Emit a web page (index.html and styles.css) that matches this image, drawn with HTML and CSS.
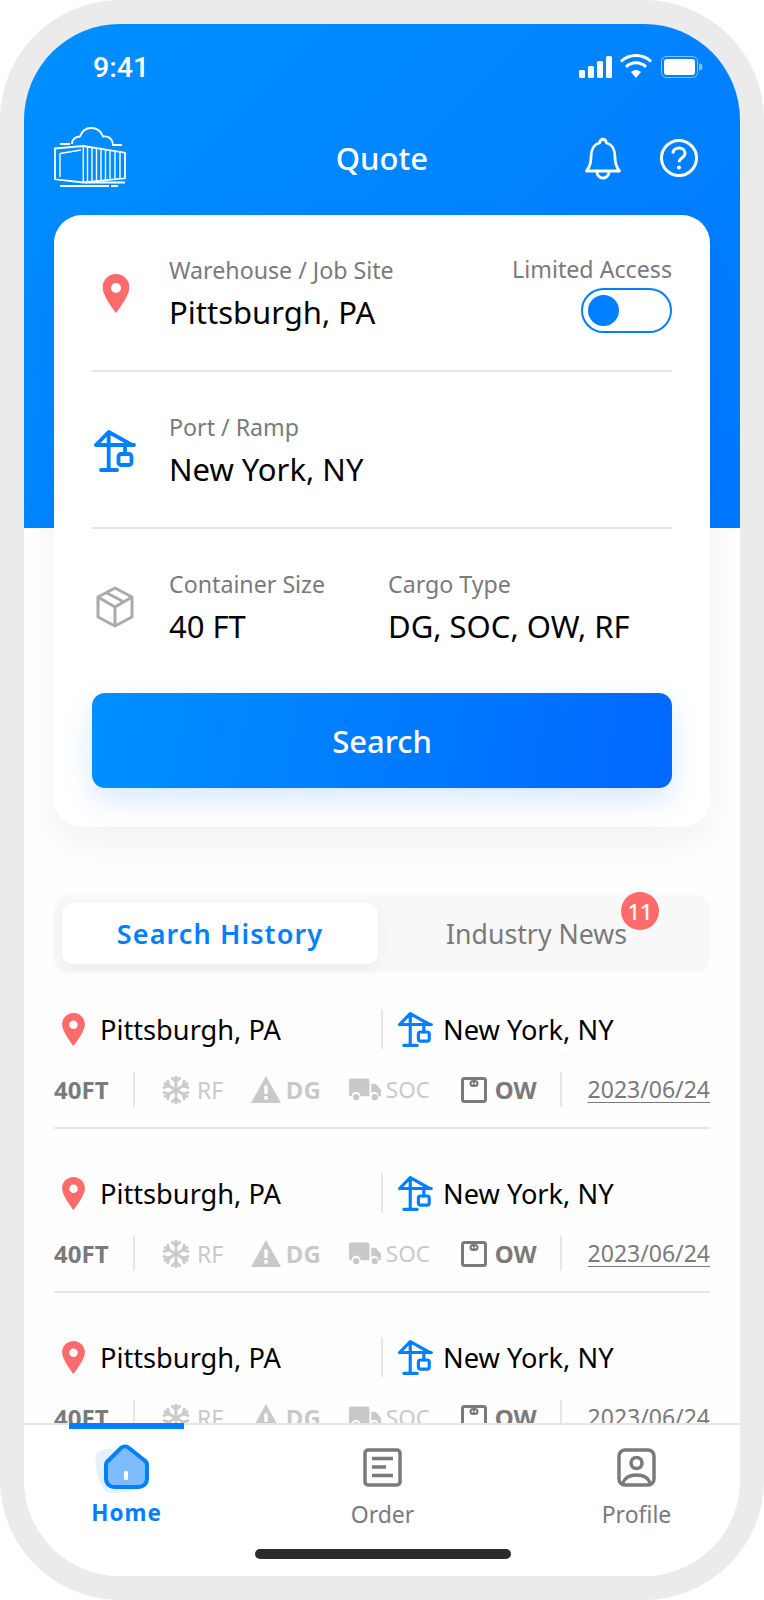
FILE: index.html
```html
<!DOCTYPE html>
<html lang="en">
<head>
<meta charset="utf-8">
<title>Quote</title>
<link rel="stylesheet" href="styles.css">
</head>
<body>
<svg class="defs" width="0" height="0" aria-hidden="true">
  <symbol id="pin" viewBox="0 0 27 39">
    <path fill="#ff6b6b" fill-rule="evenodd" d="M13.5 0C6 0 0 6 0 13.5 0 22 13.5 39 13.5 39S27 22 27 13.5C27 6 21 0 13.5 0zm0 9a5 5 0 1 1 0 10 5 5 0 0 1 0-10z"/>
  </symbol>
  <symbol id="crane" viewBox="0 0 42 42">
    <g fill="none" stroke="#007fff" stroke-width="3.8" stroke-linecap="round" stroke-linejoin="round">
      <path d="M2 15H40M2 15L14.7 2 38 15M14.7 2V40M7 40H23M31 15V24"/>
      <rect x="24.5" y="24" width="13" height="11" rx="2.5"/>
    </g>
  </symbol>
  <symbol id="arm" viewBox="0 0 30 30">
    <path fill="none" stroke="#c9c9c9" stroke-width="2.6" d="M15 15V1M10.500 2.500L15 7l4.500-4.500"/>
  </symbol>
  <symbol id="snow" viewBox="0 0 30 30">
    <use href="#arm" width="30" height="30"/>
    <use href="#arm" width="30" height="30" transform="rotate(60 15 15)"/>
    <use href="#arm" width="30" height="30" transform="rotate(120 15 15)"/>
    <use href="#arm" width="30" height="30" transform="rotate(180 15 15)"/>
    <use href="#arm" width="30" height="30" transform="rotate(240 15 15)"/>
    <use href="#arm" width="30" height="30" transform="rotate(300 15 15)"/>
  </symbol>
  <symbol id="warn" viewBox="0 0 30 27">
    <path fill="#c9c9c9" fill-rule="evenodd" d="M15 0L30 27H0zM13.300 9.500V18h3.400V9.500zM13.300 20v3.400h3.400V20z"/>
  </symbol>
  <symbol id="truck" viewBox="0 0 36 26">
    <path fill="#c9c9c9" d="M2 0H21a2 2 0 0 1 2 2V20H13a5 5 0 0 0-10 0H2a2 2 0 0 1-2-2V2A2 2 0 0 1 2 0zM25 6H30L36 13V20H33.500a5 5 0 0 0-8.500-3.500z"/>
    <circle cx="8" cy="21" r="3.600" fill="#c9c9c9"/>
    <circle cx="29" cy="21" r="3.600" fill="#c9c9c9"/>
  </symbol>
  <symbol id="scale" viewBox="0 0 26 26">
    <rect x="1.500" y="1.500" width="23" height="23" rx="2" fill="none" stroke="#7a7a7a" stroke-width="3"/>
    <rect x="8.500" y="3" width="9" height="7" rx="3.500" fill="#7a7a7a"/>
    <circle cx="11.500" cy="6.500" r="1" fill="#fff"/>
    <circle cx="14.500" cy="6.500" r="1" fill="#fff"/>
  </symbol>
</svg>

<div class="phone">
  <div class="screen">
    <div class="status">
      <span class="clock">9:41</span>
      <svg class="status-icons" width="124" height="22" viewBox="0 0 124 22">
        <g fill="#fff">
          <rect x="0" y="14" width="6" height="8" rx="1.500"/>
          <rect x="9" y="10" width="6" height="12" rx="1.500"/>
          <rect x="18" y="5" width="6" height="17" rx="1.500"/>
          <rect x="27" y="0" width="6" height="22" rx="1.500"/>
          <path d="M57 22l-5-6a8 8 0 0 1 10 0z"/>
        </g>
        <g fill="none" stroke="#fff" stroke-width="3">
          <path d="M42 5.500a22 22 0 0 1 30 0"/>
          <path d="M47 11a14 14 0 0 1 20 0"/>
        </g>
        <rect x="82.500" y="0.500" width="36" height="21" rx="5" fill="none" stroke="#fff" stroke-opacity=".5"/>
        <rect x="85" y="3" width="31" height="16" rx="3" fill="#fff"/>
        <path d="M120 7.500a3.500 3.500 0 0 1 0 7z" fill="#fff" fill-opacity=".5"/>
      </svg>
    </div>

    <header class="topbar">
      <svg class="logo" width="72" height="62" viewBox="15 15 72 62">
        <g fill="none" stroke="#fff" stroke-width="1.400">
          <path stroke-width="1.800" d="M15 38.500L43.300 36 85 42.700V68.300L43.300 72.500 15 69.300Z"/>
          <path d="M20 43.500L41 40M20 43.500V67M43.300 36V72M47.500 37V71.500M52 38V71M56.500 38.500V70.500M61 39.500V70.500M65.500 40V70M70 41V69.500M75 41.500V69M80 42V68.500"/>
          <path stroke-width="1.800" d="M20 34H30M72 35H82M45 72.500H85M20 76H69M71 76H78"/>
          <path stroke-width="1.800" d="M32 34c0-5 3-7 8-7.500C42 21 46 18 51 18c6 0 10 3 12 8.500 5-1 9 2 10 7.500"/>
        </g>
      </svg>
      <h1 class="title">Quote</h1>
      <div class="top-actions">
        <svg width="40" height="44" viewBox="0 0 40 44">
          <g fill="none" stroke="#fff" stroke-width="2.800" stroke-linejoin="round">
            <path d="M3.500 35c3.500-4 4.500-8 4.500-14 0-8 3.500-13 8.500-14 1-5 6-5 7 0 5 1 8.500 6 8.500 14 0 6 1 10 4.500 14z"/>
            <path d="M14 36a6 6 0 0 0 12 0"/>
          </g>
        </svg>
        <svg width="40" height="40" viewBox="0 0 40 40">
          <circle cx="20" cy="20" r="17.500" fill="none" stroke="#fff" stroke-width="3"/>
          <path d="M14 15.500c0-3.500 2.500-5.500 6-5.500s6 2 6 5.200c0 4.800-6 4.800-6 9" fill="none" stroke="#fff" stroke-width="3"/>
          <circle cx="20" cy="29.500" r="2" fill="#fff"/>
        </svg>
      </div>
    </header>

    <section class="card">
      <div class="row row-line">
        <svg class="row-icon icon-pin" width="27" height="39"><use href="#pin"/></svg>
        <div class="field field-grow">
          <span class="label">Warehouse / Job Site</span>
          <span class="value">Pittsburgh, PA</span>
        </div>
        <div class="access">
          <span class="label">Limited Access</span>
          <span class="toggle"><span class="knob"></span></span>
        </div>
      </div>
      <div class="row row-line">
        <svg class="row-icon" width="42" height="42"><use href="#crane"/></svg>
        <div class="field">
          <span class="label">Port / Ramp</span>
          <span class="value">New York, NY</span>
        </div>
      </div>
      <div class="row row-last">
        <svg class="row-icon" width="38" height="42" viewBox="0 0 38 42">
          <g fill="none" stroke="#aaa" stroke-width="3" stroke-linejoin="round">
            <path d="M19 2L36 11V31L19 40 2 31V11Z"/>
            <path d="M2 11L19 21 36 11M19 21V40M10 6.500L27 15.500"/>
          </g>
        </svg>
        <div class="field field-size">
          <span class="label">Container Size</span>
          <span class="value">40 FT</span>
        </div>
        <div class="field">
          <span class="label">Cargo Type</span>
          <span class="value">DG, SOC, OW, RF</span>
        </div>
      </div>
      <button class="search" type="button">Search</button>
    </section>

    <nav class="tabs">
      <span class="tab tab-active">Search History</span>
      <span class="tab tab-news">Industry News<span class="badge">11</span></span>
    </nav>

    <div class="list">
      <article class="trip">
        <div class="route">
          <div class="stop stop-from"><svg width="23" height="33"><use href="#pin"/></svg><span>Pittsburgh, PA</span></div>
          <div class="stop stop-to"><svg width="35" height="35"><use href="#crane"/></svg><span>New York, NY</span></div>
        </div>
        <div class="meta">
          <span class="size">40FT</span>
          <span class="tag tag-rf"><svg width="30" height="30"><use href="#snow"/></svg>RF</span>
          <span class="tag tag-dg"><svg width="30" height="27"><use href="#warn"/></svg><b>DG</b></span>
          <span class="tag tag-soc"><svg width="32" height="24"><use href="#truck"/></svg>SOC</span>
          <span class="tag tag-ow"><svg width="26" height="26"><use href="#scale"/></svg><b>OW</b></span>
          <span class="date">2023/06/24</span>
        </div>
      </article>
      <article class="trip">
        <div class="route">
          <div class="stop stop-from"><svg width="23" height="33"><use href="#pin"/></svg><span>Pittsburgh, PA</span></div>
          <div class="stop stop-to"><svg width="35" height="35"><use href="#crane"/></svg><span>New York, NY</span></div>
        </div>
        <div class="meta">
          <span class="size">40FT</span>
          <span class="tag tag-rf"><svg width="30" height="30"><use href="#snow"/></svg>RF</span>
          <span class="tag tag-dg"><svg width="30" height="27"><use href="#warn"/></svg><b>DG</b></span>
          <span class="tag tag-soc"><svg width="32" height="24"><use href="#truck"/></svg>SOC</span>
          <span class="tag tag-ow"><svg width="26" height="26"><use href="#scale"/></svg><b>OW</b></span>
          <span class="date">2023/06/24</span>
        </div>
      </article>
      <article class="trip">
        <div class="route">
          <div class="stop stop-from"><svg width="23" height="33"><use href="#pin"/></svg><span>Pittsburgh, PA</span></div>
          <div class="stop stop-to"><svg width="35" height="35"><use href="#crane"/></svg><span>New York, NY</span></div>
        </div>
        <div class="meta">
          <span class="size">40FT</span>
          <span class="tag tag-rf"><svg width="30" height="30"><use href="#snow"/></svg>RF</span>
          <span class="tag tag-dg"><svg width="30" height="27"><use href="#warn"/></svg><b>DG</b></span>
          <span class="tag tag-soc"><svg width="32" height="24"><use href="#truck"/></svg>SOC</span>
          <span class="tag tag-ow"><svg width="26" height="26"><use href="#scale"/></svg><b>OW</b></span>
          <span class="date">2023/06/24</span>
        </div>
      </article>
    </div>

    <footer class="nav">
      <div class="nav-items">
        <div class="nav-item nav-active">
          <svg width="60" height="52" viewBox="-4 0 60 52">
            <path fill="#e3f0ff" d="M-1 12C0 8 6 6 16 6L40 46C30 50 14 52 8 48 2 40-3 24-1 12z"/>
            <path d="M24 5a6 6 0 0 1 8 0L47 17a6 6 0 0 1 3 5V36a8 8 0 0 1-8 8H17a8 8 0 0 1-8-8V22a6 6 0 0 1 3-5z" fill="#7fbcff" stroke="#007fff" stroke-width="4" stroke-linejoin="round"/>
            <rect x="27" y="28" width="4" height="9" rx="1.500" fill="#fff"/>
          </svg>
          <span class="nav-label">Home</span>
        </div>
        <div class="nav-item">
          <svg width="39" height="39" viewBox="0 0 39 39">
            <rect x="2" y="2" width="35" height="35" rx="3" fill="none" stroke="#7a7a7a" stroke-width="3.500"/>
            <path d="M9 10.500H30M9 19H23M9 27.500H30" stroke="#7a7a7a" stroke-width="3.500"/>
          </svg>
          <span class="nav-label">Order</span>
        </div>
        <div class="nav-item">
          <svg width="39" height="39" viewBox="0 0 39 39">
            <rect x="2" y="2" width="35" height="35" rx="6" fill="none" stroke="#7a7a7a" stroke-width="3.500"/>
            <circle cx="19.500" cy="15" r="5.500" fill="none" stroke="#7a7a7a" stroke-width="3.500"/>
            <path d="M6 35c2-6 8-8 13.500-8S31 29 33 35" fill="none" stroke="#7a7a7a" stroke-width="3.500"/>
          </svg>
          <span class="nav-label">Profile</span>
        </div>
      </div>
      <div class="indicator"></div>
    </footer>
  </div>
</div>
</body>
</html>
```

FILE: styles.css
```css
* { box-sizing: border-box; }
html, body { margin: 0; padding: 0; background: #fff; }
body { font-family: "Noto Sans", sans-serif; color: #000; }
.defs { display: block; height: 0; }
svg { display: block; flex: none; overflow: visible; }

.phone {
  width: 764px;
  height: 1600px;
  padding: 24px;
  background: #ebebeb;
  border-radius: 120px;
}
.screen {
  width: 716px;
  height: 1552px;
  border-radius: 96px;
  overflow: hidden;
  display: flex;
  flex-direction: column;
  background: linear-gradient(135deg, #0090ff, #0077ff) top / 100% 504px no-repeat, #fefefe;
}

.status {
  height: 84px;
  flex: none;
  display: flex;
  align-items: center;
  justify-content: space-between;
  padding: 2px 37px 0 69px;
  color: #fff;
}
.clock { font-family: Roboto, sans-serif; font-weight: 500; font-size: 28.5px; }
.status-icons { margin-top: 0; }

.topbar {
  height: 100px;
  flex: none;
  margin-bottom: 7px;
  display: flex;
  align-items: center;
  justify-content: space-between;
  padding: 0 41px 0 31px;
  color: #fff;
}
.title { margin: 0 0 0 54px; font-size: 31px; font-weight: 500; }
.logo { margin-top: -4px; }
.top-actions { display: flex; gap: 36px; align-items: center; }

.card {
  flex: none;
  height: 612px;
  margin: 0 30px;
  padding: 0 38px;
  background: #fff;
  border-radius: 28px;
  box-shadow: 0 16px 40px rgba(0, 0, 0, .05);
}
.row {
  height: 157px;
  display: flex;
  align-items: center;
  position: relative;
}
.row-line { border-bottom: 2px solid #e6e6e6; }
.row-last { height: 154px; }
.row .row-icon { position: absolute; left: 23px; transform: translate(-50%, 1px); }
.row .icon-pin { left: 24px; transform: translate(-50%, 1px); }
.field { margin: -2px 0 0 77px; display: flex; flex-direction: column; gap: 3px; }
.field-size { width: 219px; }
.field-size + .field { margin-left: 0; }
.field-grow { flex: 1; }
.label { font-size: 23.2px; line-height: 38px; color: #7a7a7a; }
.value { font-size: 31px; line-height: 40px; color: #000; }
.access { display: flex; flex-direction: column; align-items: flex-end; margin-top: -2px; }
.toggle {
  width: 91px;
  height: 45px;
  border: 2px solid #007fff;
  border-radius: 23px;
  display: flex;
  align-items: center;
  padding-left: 5px;
}
.knob { width: 31px; height: 31px; border-radius: 50%; background: #007fff; }

.search {
  display: block;
  width: 100%;
  height: 95px;
  margin-top: 10px;
  border: 0;
  border-radius: 13px;
  color: #fff;
  font: 500 31px "Noto Sans", sans-serif;
  background: linear-gradient(100deg, #0090ff, #0068ff);
  box-shadow: 0 12px 30px rgba(0, 119, 255, .16);
}

.tabs {
  flex: none;
  height: 77px;
  margin: 68px 30px 37px;
  padding: 8px;
  display: flex;
  background: #f8f8f8;
  border-radius: 14px;
}
.tab {
  flex: 1;
  display: flex;
  align-items: center;
  justify-content: center;
  position: relative;
  font-size: 26.7px;
  color: #7a7a7a;
}
.tab-news { padding-right: 7px; }
.tab-active {
  flex: none;
  width: 316px;
  background: #fff;
  border-radius: 10px;
  color: #007fff;
  font-size: 27px;
  font-weight: 600;
  letter-spacing: 1.1px;
  box-shadow: 0 6px 16px rgba(0, 0, 0, .05);
}
.badge {
  position: absolute;
  top: -11px;
  right: 43px;
  width: 38px;
  height: 38px;
  border-radius: 50%;
  background: #ff6b6b;
  color: #fff;
  font-size: 22px;
  font-weight: 500;
  display: flex;
  align-items: center;
  justify-content: center;
}

.list {
  flex: 1;
  min-height: 0;
  overflow: hidden;
  padding: 0 30px;
}
.trip { height: 120px; border-bottom: 2px solid #e6e6e6; }
.trip + .trip { margin-top: 44px; }
.route { display: flex; height: 40px; }
.stop { display: flex; align-items: center; font-size: 27.2px; color: #000; }
.stop-from { width: 327px; padding-left: 8px; gap: 15px; }
.stop-to { border-left: 2px solid #e6e6e6; padding-left: 15px; gap: 10px; }
.meta {
  margin-top: 23px;
  height: 35px;
  display: flex;
  align-items: center;
  color: #c9c9c9;
  font-size: 23px;
  white-space: nowrap;
}
.size { width: 81px; font-size: 24px; font-weight: 700; color: #7a7a7a; border-right: 2px solid #e6e6e6; line-height: 35px; }
.tag { display: flex; align-items: center; }
.tag b { font-size: 24px; font-weight: 700; }
.tag-rf { margin-left: 26px; gap: 6px; width: 90px; }
.tag-dg { gap: 5px; width: 98px; }
.tag-soc { gap: 5px; width: 112px; font-size: 22.5px; }
.tag-ow { gap: 8px; color: #7a7a7a; width: 99px; }
.date {
  border-left: 2px solid #e6e6e6;
  line-height: 35px;
  padding-left: 26px;
  color: #7a7a7a;
  text-decoration: underline;
  text-underline-offset: 4px;
  text-decoration-thickness: 1px;
}

.nav {
  flex: none;
  height: 153px;
  background: #fff;
  border-top: 2px solid #e6e6e6;
  display: flex;
  flex-direction: column;
  align-items: center;
}
.nav-items {
  align-self: stretch;
  display: flex;
  padding-left: 45px;
  gap: 141px;
}
.nav-item {
  width: 115px;
  height: 106px;
  position: relative;
  display: flex;
  flex-direction: column;
  align-items: center;
  justify-content: flex-end;
}
.nav-item + .nav-item + .nav-item { margin-left: -2px; }
.nav-item svg { position: absolute; top: 23px; left: 38px; }
.nav-active svg { top: 18px; left: 24px; }
.nav-active::before {
  content: "";
  position: absolute;
  top: -2px;
  left: 0;
  width: 100%;
  height: 6px;
  background: #007fff;
}
.nav-label { font-size: 23px; line-height: 34px; color: #7a7a7a; }
.nav-active .nav-label { color: #007fff; font-size: 22.5px; line-height: 32px; margin-bottom: 2px; font-weight: 700; letter-spacing: 1px; }
.indicator { width: 256px; height: 10px; margin: 18px 0 0 2px; background: #2b2b2b; border-radius: 5px; }
```
